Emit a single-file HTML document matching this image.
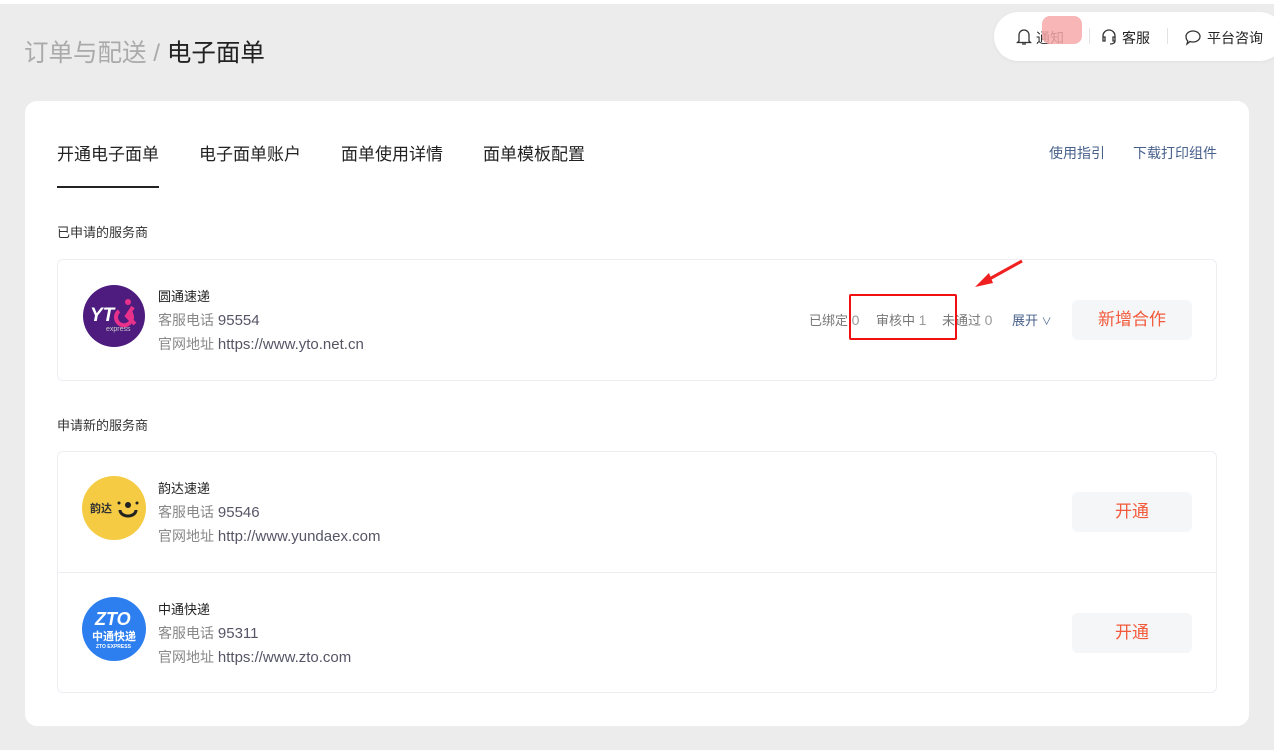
<!DOCTYPE html>
<html><head><meta charset="utf-8"><style>
*{margin:0;padding:0;box-sizing:border-box}
body{width:1274px;height:750px;background:#ececec;font-family:"Liberation Sans","Noto Sans CJK SC",sans-serif;position:relative;overflow:hidden;color:#222}
.topw{position:absolute;left:0;top:0;width:1274px;height:4px;background:#fff}
.a{position:absolute;white-space:nowrap}
.crumb{left:24px;top:34px;font-size:24.5px;color:#aaa}
.crumb b{font-weight:normal;color:#222}
.pill{position:absolute;left:994px;top:12px;width:290px;height:49px;background:#fff;border-radius:25px;box-shadow:0 1px 4px rgba(0,0,0,.05)}
.card{position:absolute;left:25px;top:101px;width:1224px;height:625px;background:#fff;border-radius:12px}
.tab{font-size:17px;top:140px;color:#222}
.link{font-size:14px;top:143px;color:#48618c}
.sec{font-size:13px;color:#333}
.box{position:absolute;left:57px;width:1160px;border:1px solid #eceef2;border-radius:6px}
.name{font-size:13px;color:#222}
.sub{font-size:14px;color:#888}
.sub span{color:#556;font-size:15px}
.btn{position:absolute;left:1072px;width:120px;height:40px;background:#f5f6f8;border-radius:6px;color:#f25a3b;font-size:17px;text-align:center;line-height:40px}
.st{font-size:13px;color:#777;top:310px}
.st span{font-size:14px}
</style></head><body>
<div class="topw"></div>
<div class="a crumb">订单与配送 / <b>电子面单</b></div>
<div class="pill">
 <svg class="a" style="left:22px;top:16px" width="16" height="18" viewBox="0 0 16 18"><path d="M3 13V7a5 5 0 0110 0v6l1.5 1.5h-13z M6 16h4" fill="none" stroke="#333" stroke-width="1.3"/></svg>
 <div class="a" style="left:42px;top:16px;font-size:14px">通知</div>
 <div class="a" style="left:48px;top:4px;width:40px;height:28px;background:#f7a9a9;border-radius:8px;opacity:.85"></div>
 <div class="a" style="left:95px;top:16px;width:1px;height:16px;background:#e3e3e3"></div>
 <svg class="a" style="left:106px;top:16px" width="18" height="18" viewBox="0 0 18 18"><path d="M3 10V8a6 6 0 0112 0v2 M3 9h2v4H3z M13 9h2v4h-2z M15 13c0 2-2 3-5 3" fill="none" stroke="#333" stroke-width="1.3"/></svg>
 <div class="a" style="left:128px;top:16px;font-size:14px">客服</div>
 <div class="a" style="left:173px;top:16px;width:1px;height:16px;background:#e3e3e3"></div>
 <svg class="a" style="left:190px;top:17px" width="18" height="17" viewBox="0 0 18 17"><path d="M9 2c4 0 7 2.5 7 5.5S13 13 9 13c-1 0-2 0-3-.5L3 15l.8-3C2.7 11 2 9.3 2 7.5 2 4.5 5 2 9 2z" fill="none" stroke="#333" stroke-width="1.3"/></svg>
 <div class="a" style="left:213px;top:16px;font-size:14px">平台咨询</div>
</div>
<div class="card"></div>
<div class="a tab" style="left:57px">开通电子面单</div>
<div class="a" style="left:57px;top:186px;width:102px;height:2px;background:#222"></div>
<div class="a tab" style="left:199px">电子面单账户</div>
<div class="a tab" style="left:341px">面单使用详情</div>
<div class="a tab" style="left:483px">面单模板配置</div>
<div class="a link" style="left:1049px">使用指引</div>
<div class="a link" style="left:1133px">下载打印组件</div>
<div class="a sec" style="left:57px;top:222px">已申请的服务商</div>
<div class="box" style="top:259px;height:122px"></div>
<svg class="a" style="left:83px;top:285px" width="62" height="62" viewBox="0 0 62 62"><circle cx="31" cy="31" r="31" fill="#4e1c7e"/><text x="7" y="36" font-family="Liberation Sans" font-weight="bold" font-style="italic" font-size="19" fill="#fff">YT</text><path d="M36 26a8 8 0 1 0 10 0M50 22l-6 9 8 8" fill="none" stroke="#e8318a" stroke-width="4"/><circle cx="45" cy="17" r="3" fill="#e8318a"/><text x="23" y="46" font-family="Liberation Sans" font-size="7" fill="#ccc">express</text></svg>
<div class="a name" style="left:158px;top:286px">圆通速递</div>
<div class="a sub" style="left:158px;top:310px">客服电话 <span>95554</span></div>
<div class="a sub" style="left:158px;top:334px">官网地址 <span>https://www.yto.net.cn</span></div>
<div class="a st" style="left:809px">已绑定 <span style="color:#999">0</span></div>
<div class="a st" style="left:876px">审核中 <span style="color:#999">1</span></div>
<div class="a st" style="left:942px">未通过 <span style="color:#999">0</span></div>
<div class="a st" style="left:1012px;color:#48618c">展开 <span style="font-size:10px">∨</span></div>
<div class="a" style="left:849px;top:294px;width:108px;height:46px;border:2px solid #f01010;border-radius:2px"></div>
<svg class="a" style="left:970px;top:258px" width="56" height="34" viewBox="0 0 56 34"><path d="M52 3L14 24" stroke="#f02020" stroke-width="3"/><path d="M5 29l14-14 4 10z" fill="#f02020"/></svg>
<div class="btn" style="top:300px">新增合作</div>
<div class="a sec" style="left:57px;top:415px">申请新的服务商</div>
<div class="box" style="top:451px;height:242px"></div>
<div class="a" style="left:58px;top:572px;width:1158px;height:1px;background:#eceef2"></div>
<svg class="a" style="left:82px;top:476px" width="64" height="64" viewBox="0 0 64 64"><circle cx="32" cy="32" r="32" fill="#f5cb43"/><text x="8" y="36" font-family="Noto Sans CJK SC" font-weight="bold" font-size="11" fill="#333">韵达</text><path d="M38 34a8 6 0 0 0 16 0" fill="none" stroke="#222" stroke-width="3"/><circle cx="46" cy="29" r="3" fill="#222"/><circle cx="37" cy="27" r="1.5" fill="#222"/><circle cx="55" cy="27" r="1.5" fill="#222"/></svg>
<div class="a name" style="left:158px;top:478px">韵达速递</div>
<div class="a sub" style="left:158px;top:502px">客服电话 <span>95546</span></div>
<div class="a sub" style="left:158px;top:526px">官网地址 <span>http://www.yundaex.com</span></div>
<div class="btn" style="top:492px">开通</div>
<svg class="a" style="left:82px;top:597px" width="64" height="64" viewBox="0 0 64 64"><circle cx="32" cy="32" r="32" fill="#2d7ff0"/><text x="13" y="28" font-family="Liberation Sans" font-weight="bold" font-style="italic" font-size="18" fill="#fff">ZTO</text><text x="10" y="43" font-family="Noto Sans CJK SC" font-weight="bold" font-size="11" fill="#fff">中通快递</text><text x="14" y="51" font-family="Liberation Sans" font-weight="bold" font-size="5" fill="#fff">ZTO EXPRESS</text></svg>
<div class="a name" style="left:158px;top:599px">中通快递</div>
<div class="a sub" style="left:158px;top:623px">客服电话 <span>95311</span></div>
<div class="a sub" style="left:158px;top:647px">官网地址 <span>https://www.zto.com</span></div>
<div class="btn" style="top:613px">开通</div>
</body></html>
